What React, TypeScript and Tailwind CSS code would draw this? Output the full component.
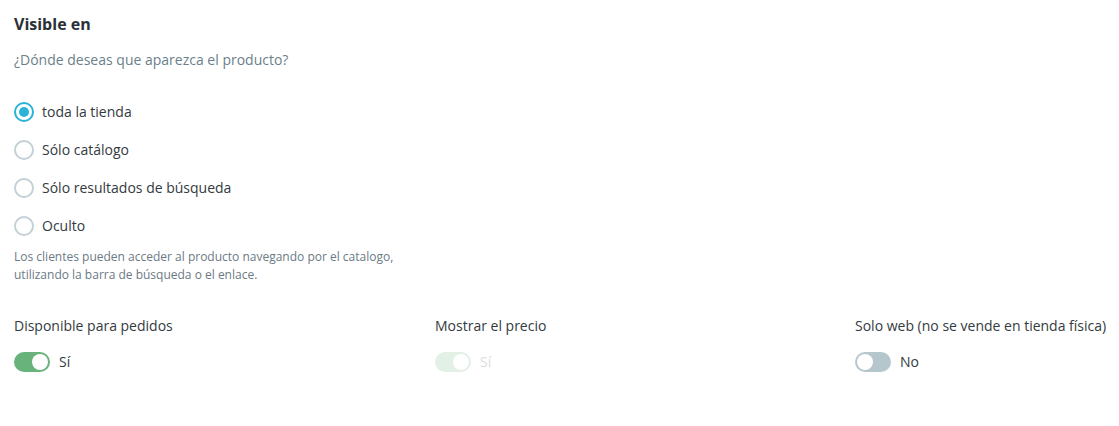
import React, { useState } from "react";

const options = [
  "toda la tienda",
  "Sólo catálogo",
  "Sólo resultados de búsqueda",
  "Oculto",
];

const Radio = ({ checked }: { checked: boolean }) => (
  <span
    className={
      checked
        ? "flex h-5 w-5 shrink-0 items-center justify-center rounded-full border-2 border-[#29b3d6] bg-white"
        : "flex h-5 w-5 shrink-0 items-center justify-center rounded-full border-2 border-[#c3d0d6] bg-white"
    }
  >
    {checked && <span className="h-[10px] w-[10px] rounded-full bg-[#29b3d6]"></span>}
  </span>
);

const Toggle = ({
  on,
  disabled,
}: {
  on: boolean;
  disabled?: boolean;
}) => {
  const track = disabled
    ? "bg-[#e2f0e5]"
    : on
    ? "bg-[#68b27c]"
    : "bg-[#b5c6cd]";
  return (
    <span
      className={`flex h-5 w-9 shrink-0 items-center rounded-full p-[2px] ${track} ${
        on ? "justify-end" : "justify-start"
      }`}
    >
      <span className="h-4 w-4 rounded-full bg-white"></span>
    </span>
  );
};

export default function App() {
  const [selected, setSelected] = useState(0);

  return (
    <div
      className="h-[426px] w-[1119px] bg-white px-[14px] pt-[13px] text-[#333a40]"
      style={{ fontFamily: "'Open Sans', 'Liberation Sans', sans-serif" }}
    >
      <h2 className="text-[16px] font-bold leading-[22px] text-[#2b3036]">
        Visible en
      </h2>
      <p className="mt-[15px] text-[14px] leading-5 text-[#6c7f8b]">
        ¿Dónde deseas que aparezca el producto?
      </p>

      <div className="mt-[32px] flex flex-col gap-[18px]">
        {options.map((opt, i) => (
          <label
            key={opt}
            className="flex cursor-pointer items-center gap-2 text-[14px] leading-5 text-[#333a40]"
            onClick={() => setSelected(i)}
          >
            <Radio checked={selected === i} />
            <span>{opt}</span>
          </label>
        ))}
      </div>

      <p className="mt-[12px] w-[400px] text-[12px] leading-[18px] text-[#6b7a85]">
        Los clientes pueden acceder al producto navegando por el catalogo,
        utilizando la barra de búsqueda o el enlace.
      </p>

      <div className="mt-[32px] grid grid-cols-[421px_420px_1fr]">
        <div className="flex flex-col gap-[16px]">
          <span className="text-[14px] leading-5">Disponible para pedidos</span>
          <div className="flex items-center gap-[9px]">
            <Toggle on />
            <span className="text-[14px] leading-5">Sí</span>
          </div>
        </div>
        <div className="flex flex-col gap-[16px]">
          <span className="text-[14px] leading-5">Mostrar el precio</span>
          <div className="flex items-center gap-[9px]">
            <Toggle on disabled />
            <span className="text-[14px] leading-5 text-[#d9dde0]">Sí</span>
          </div>
        </div>
        <div className="flex flex-col gap-[16px]">
          <span className="whitespace-nowrap text-[14px] leading-5">
            Solo web (no se vende en tienda física)
          </span>
          <div className="flex items-center gap-[9px]">
            <Toggle on={false} />
            <span className="text-[14px] leading-5">No</span>
          </div>
        </div>
      </div>
    </div>
  );
}
